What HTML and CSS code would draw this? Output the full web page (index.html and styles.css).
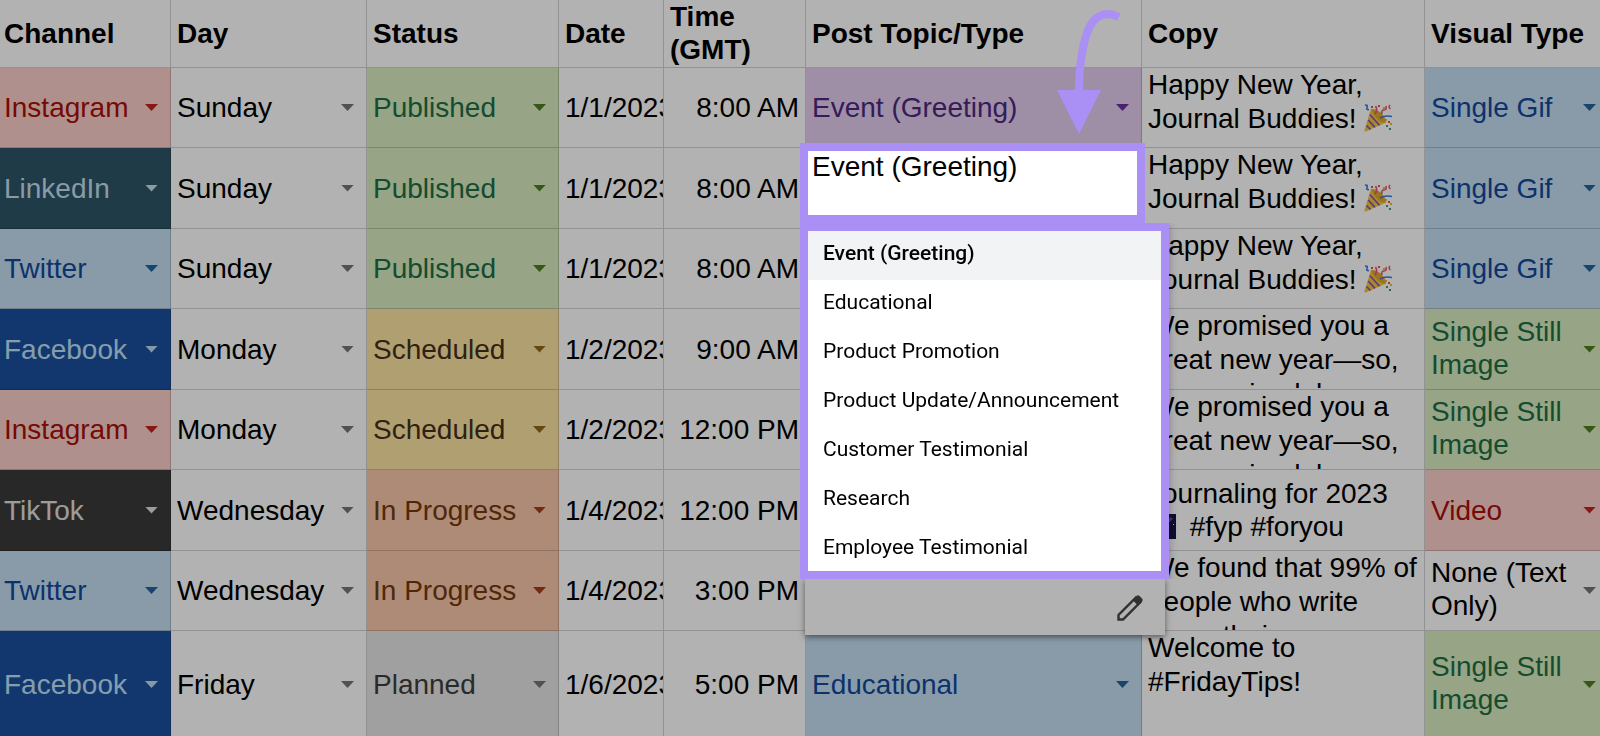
FILE: index.html
```
<!DOCTYPE html>
<html lang="en">
<head>
  <meta charset="UTF-8">
  <meta name="viewport" content="width=device-width, initial-scale=1.0">
  <title>Social Media Content Calendar</title>
  <link rel="stylesheet" href="styles.css">
</head>
<body>
  <!-- Shared icons -->
  <svg class="defs" aria-hidden="true">
    <symbol id="party" viewBox="0 0 28 28">
      <path d="M7 5 L22 18.500 L2 27.500 Q0 28 .5 26 Z" fill="#f5c33b"/>
      <path d="M7 5 Q14 5 18.500 10.500 Q23 16 21.500 19 Q16 18 12 13.500 Q8 9 7 5Z" fill="#e0a52c"/>
      <path d="M5.800 10.500 L15.500 21.200 M4.200 16 L11 23.300 M2.400 21.500 L6.500 25.500" stroke="#8455b5" stroke-width="1.700" fill="none"/>
      <path d="M11 10 Q14 6 11.500 2 M18 10 Q17 6 20 6 Q23 6 22 2 M26 1 Q24 3 26.500 5" stroke="#e0567c" stroke-width="1.600" fill="none"/>
      <path d="M1 1.500 Q4 0 3 3.500 Q2 6 5 5.500 M16 14 Q21 11 28 12.500" stroke="#3b78d8" stroke-width="1.600" fill="none"/>
      <path d="M14 1h2v2h-2zM7 2h2v2h-2zM24 17h2v2h-2z" fill="#e5533c"/>
      <path d="M22 21h2v2h-2zM25 24h2v2h-2z" fill="#3b9a6d"/>
      <path d="M19 3h2v2h-2zM26 19h2v2h-2zM21 15h2v2h-2z" fill="#f0b62c"/>
    </symbol>
    <symbol id="night" viewBox="0 0 28 28">
      <rect y="2" width="28" height="25" fill="#161540"/>
      <path d="M4 24 L24 6" stroke="#5a4fa0" stroke-width="3"/>
      <path d="M6 8h1v1h-1zM20 20h1v1h-1zM25 12h1v1h-1zM14 5h1v1h-1z" fill="#fff"/>
    </symbol>
  </svg>

  <table class="sheet">
    <colgroup>
      <col class="col-channel">
      <col class="col-day">
      <col class="col-status">
      <col class="col-date">
      <col class="col-time">
      <col class="col-topic">
      <col class="col-copy">
      <col class="col-visual">
    </colgroup>
    <thead>
      <tr>
        <th>Channel</th>
        <th>Day</th>
        <th>Status</th>
        <th>Date</th>
        <th>Time (GMT)</th>
        <th>Post Topic/Type</th>
        <th>Copy</th>
        <th>Visual Type</th>
      </tr>
    </thead>
    <tbody>
      <tr>
        <td class="red"><div class="chip"><select aria-label="Channel"><option>Instagram</option></select></div></td>
        <td><div class="chip"><select aria-label="Day"><option>Sunday</option></select></div></td>
        <td class="green"><div class="chip"><select aria-label="Status"><option>Published</option></select></div></td>
        <td class="date">1/1/2023</td>
        <td class="time">8:00 AM</td>
        <td class="purple"><div class="chip"><select aria-label="Post topic"><option>Event (Greeting)</option></select></div></td>
        <td class="copy"><div class="clip">Happy New Year, Journal Buddies! <svg class="emoji"><use href="#party"/></svg></div></td>
        <td class="blue"><div class="chip"><select aria-label="Visual type"><option>Single Gif</option></select></div></td>
      </tr>
      <tr>
        <td class="teal"><div class="chip"><select aria-label="Channel"><option>LinkedIn</option></select></div></td>
        <td><div class="chip"><select aria-label="Day"><option>Sunday</option></select></div></td>
        <td class="green"><div class="chip"><select aria-label="Status"><option>Published</option></select></div></td>
        <td class="date">1/1/2023</td>
        <td class="time">8:00 AM</td>
        <td class="editing">
          <div class="popup">
            <textarea class="editor" aria-label="Post topic">Event (Greeting)</textarea>
            <ul class="options" role="listbox" aria-label="Post topics">
              <li class="selected" role="option" aria-selected="true">Event (Greeting)</li>
              <li role="option">Educational</li>
              <li role="option">Product Promotion</li>
              <li role="option">Product Update/Announcement</li>
              <li role="option">Customer Testimonial</li>
              <li role="option">Research</li>
              <li role="option">Employee Testimonial</li>
            </ul>
            <div class="popup-footer">
              <button class="edit" aria-label="Edit options">
                <svg viewBox="0 0 26 26">
                  <path d="M1.500 24.500 V20 L19 2.500 L23.500 7 L6 24.500 Z" fill="none" stroke="#2f3133" stroke-width="2.400"/>
                  <path d="M15.500 5 L19.500 1 Q21 -.3 22.500 1 L25 3.500 Q26.300 5 25 6.500 L21 10.500 Z" fill="#2f3133"/>
                </svg>
              </button>
            </div>
          </div>
          <svg class="pointer" viewBox="0 0 68 128" aria-hidden="true">
            <path d="M63 9 C53 4 42 4 34 18 C27 31 23 58 23 84" fill="none" stroke="#aa8ff5" stroke-width="8"/>
            <path d="M1 82 H45 L23 126 Z" fill="#aa8ff5"/>
          </svg>
        </td>
        <td class="copy"><div class="clip">Happy New Year, Journal Buddies! <svg class="emoji"><use href="#party"/></svg></div></td>
        <td class="blue"><div class="chip"><select aria-label="Visual type"><option>Single Gif</option></select></div></td>
      </tr>
      <tr>
        <td class="blue"><div class="chip"><select aria-label="Channel"><option>Twitter</option></select></div></td>
        <td><div class="chip"><select aria-label="Day"><option>Sunday</option></select></div></td>
        <td class="green"><div class="chip"><select aria-label="Status"><option>Published</option></select></div></td>
        <td class="date">1/1/2023</td>
        <td class="time">8:00 AM</td>
        <td></td>
        <td class="copy"><div class="clip">Happy New Year, Journal Buddies! <svg class="emoji"><use href="#party"/></svg></div></td>
        <td class="blue"><div class="chip"><select aria-label="Visual type"><option>Single Gif</option></select></div></td>
      </tr>
      <tr>
        <td class="navy"><div class="chip"><select aria-label="Channel"><option>Facebook</option></select></div></td>
        <td><div class="chip"><select aria-label="Day"><option>Monday</option></select></div></td>
        <td class="yellow"><div class="chip"><select aria-label="Status"><option>Scheduled</option></select></div></td>
        <td class="date">1/2/2023</td>
        <td class="time">9:00 AM</td>
        <td></td>
        <td class="copy"><div class="clip">We promised you a great new year—so, as promised, here</div></td>
        <td class="green"><div class="chip"><button aria-haspopup="listbox">Single Still Image</button></div></td>
      </tr>
      <tr>
        <td class="red"><div class="chip"><select aria-label="Channel"><option>Instagram</option></select></div></td>
        <td><div class="chip"><select aria-label="Day"><option>Monday</option></select></div></td>
        <td class="yellow"><div class="chip"><select aria-label="Status"><option>Scheduled</option></select></div></td>
        <td class="date">1/2/2023</td>
        <td class="time">12:00 PM</td>
        <td></td>
        <td class="copy"><div class="clip">We promised you a great new year—so, as promised, here</div></td>
        <td class="green"><div class="chip"><button aria-haspopup="listbox">Single Still Image</button></div></td>
      </tr>
      <tr>
        <td class="black"><div class="chip"><select aria-label="Channel"><option>TikTok</option></select></div></td>
        <td><div class="chip"><select aria-label="Day"><option>Wednesday</option></select></div></td>
        <td class="orange"><div class="chip"><select aria-label="Status"><option>In Progress</option></select></div></td>
        <td class="date">1/4/2023</td>
        <td class="time">12:00 PM</td>
        <td></td>
        <td>Journaling for 2023<br><svg class="emoji wide"><use href="#night"/></svg> #fyp #foryou</td>
        <td class="red"><div class="chip"><select aria-label="Visual type"><option>Video</option></select></div></td>
      </tr>
      <tr>
        <td class="blue"><div class="chip"><select aria-label="Channel"><option>Twitter</option></select></div></td>
        <td><div class="chip"><select aria-label="Day"><option>Wednesday</option></select></div></td>
        <td class="orange"><div class="chip"><select aria-label="Status"><option>In Progress</option></select></div></td>
        <td class="date">1/4/2023</td>
        <td class="time">3:00 PM</td>
        <td></td>
        <td class="copy"><div class="clip">We found that 99% of people who write down their new year</div></td>
        <td><div class="chip"><button aria-haspopup="listbox">None (Text Only)</button></div></td>
      </tr>
      <tr class="tall">
        <td class="navy"><div class="chip"><select aria-label="Channel"><option>Facebook</option></select></div></td>
        <td><div class="chip"><select aria-label="Day"><option>Friday</option></select></div></td>
        <td class="gray"><div class="chip"><select aria-label="Status"><option>Planned</option></select></div></td>
        <td class="date">1/6/2023</td>
        <td class="time">5:00 PM</td>
        <td class="blue"><div class="chip"><select aria-label="Post topic"><option>Educational</option></select></div></td>
        <td class="copy"><div class="clip">Welcome to #FridayTips!</div></td>
        <td class="green"><div class="chip"><button aria-haspopup="listbox">Single Still Image</button></div></td>
      </tr>
    </tbody>
  </table>
  <div class="scrim"></div>
</body>
</html>
```
FILE: styles.css
```
* {
  box-sizing: border-box;
}

body {
  margin: 0;
  height: 100vh;
  overflow: hidden;
  background: #fff;
  color: #000;
  font-family: Arial, "Liberation Sans", sans-serif;
  font-size: 28px;
  line-height: 33px;
}

.defs {
  display: none;
}

/* Dims the sheet, the popup stays above it */
.scrim {
  position: fixed;
  inset: 0;
  z-index: 1;
  background: rgba(0, 0, 0, 0.3);
  pointer-events: none;
}

/* Sheet */
.sheet {
  width: 100%;
  table-layout: fixed;
  border-collapse: separate;
  border-spacing: 0;
}

.col-channel { width: 171px; }
.col-day { width: 196px; }
.col-status { width: 192px; }
.col-date { width: 105px; }
.col-time { width: 142px; }
.col-topic { width: 336px; }
.col-copy { width: 283px; }

th,
td {
  height: 80px;
  padding: 0 6px;
  border: solid rgba(0, 0, 0, 0.18);
  border-width: 0 1px 1px 0;
  text-align: left;
  vertical-align: middle;
}

th {
  height: 68px;
  padding-bottom: 1px;
  font-weight: 700;
}

tbody tr:nth-child(even) td {
  height: 81px;
}

tbody tr.tall td {
  height: 108px;
}

th:first-child,
td:first-child {
  padding-left: 4px;
}

th:last-child,
td:last-child {
  padding-right: 4px;
  border-right: 0;
}

.date {
  padding-right: 0;
  overflow: hidden;
  white-space: nowrap;
}

.time {
  text-align: right;
}

.copy {
  padding-right: 4px;
  line-height: 34px;
  vertical-align: top;
}

.clip {
  max-height: 79px;
  overflow: hidden;
}

.emoji {
  width: 28px;
  height: 28px;
  vertical-align: -4px;
}

.emoji.wide {
  margin-right: 6px;
}

/* Dropdown chips */
.chip {
  display: flex;
  align-items: center;
  margin-right: 6px;
}

.chip::after {
  content: "";
  width: 13px;
  height: 7px;
  flex: none;
  background: var(--arrow, #757575);
  clip-path: polygon(0 0, 100% 0, 50% 100%);
  pointer-events: none;
}

td:last-child .chip {
  margin-right: 0;
}

.chip select,
.chip button {
  flex: 1;
  min-width: 0;
  padding: 0;
  border: 0;
  background: none;
  appearance: none;
  font: inherit;
  color: inherit;
  text-align: left;
  cursor: pointer;
}

.chip button {
  padding-bottom: 3px;
}

.red { background: #fdcfc9; color: #a80f0a; --arrow: #c5221f; }
.teal { background: #2b5566; color: #c6dfea; --arrow: #c6dfea; }
.blue { background: #c4dff2; color: #12489b; --arrow: #22639c; }
.navy { background: #1b4f9f; color: #bfe1f6; --arrow: #bfd9f2; }
.black { background: #3a3a3a; color: #e0e0e0; --arrow: #e0e0e0; }
.green { background: #d8ebc0; color: #1e6e45; --arrow: #4f7d22; }
.yellow { background: #fce4a2; color: #473018; --arrow: #92691a; }
.orange { background: #f9c7aa; color: #75390c; --arrow: #a63d1a; }
.gray { background: #e6e6e6; color: #3d3d3d; --arrow: #757575; }
.purple { background: #e2cdee; color: #4c2980; --arrow: #6a2fa0; }

/* Open editor with its option list */
.editing {
  position: relative;
}

.popup {
  position: absolute;
  top: -5px;
  left: -6px;
  z-index: 2;
  width: 369px;
}

.editor {
  display: block;
  width: 345px;
  height: 80px;
  padding: 0 4px;
  border: 8px solid #aa8ff5;
  outline: 0;
  background: #fff;
  color: #000;
  font: inherit;
  line-height: 32px;
  resize: none;
  overflow: hidden;
}

.options {
  position: relative;
  height: 356px;
  margin: 0;
  padding: 0;
  border: 8px solid #aa8ff5;
  background: #fff;
  box-shadow: 0 2px 8px rgba(0, 0, 0, 0.3);
  clip-path: inset(0 -12px 0 0);
  list-style: none;
  overflow: hidden;
  font-family: Roboto, sans-serif;
  font-size: 21px;
}

.options li {
  height: 49px;
  padding: 0 15px 4px;
  line-height: 45px;
  white-space: nowrap;
}

.options .selected {
  background: #f1f3f4;
  font-weight: 500;
}

.popup-footer {
  display: flex;
  align-items: center;
  justify-content: flex-end;
  height: 56px;
  margin: 0 4px 0 5px;
  padding: 2px 22px 0;
  background: #b2b2b2;
  box-shadow: 0 2px 6px rgba(0, 0, 0, 0.5);
}

.edit {
  display: flex;
  padding: 0;
  border: 0;
  background: none;
  cursor: pointer;
}

.edit svg {
  width: 26px;
  height: 26px;
}

.pointer {
  position: absolute;
  top: -140px;
  left: 250px;
  z-index: 2;
  width: 68px;
  height: 128px;
}
```
